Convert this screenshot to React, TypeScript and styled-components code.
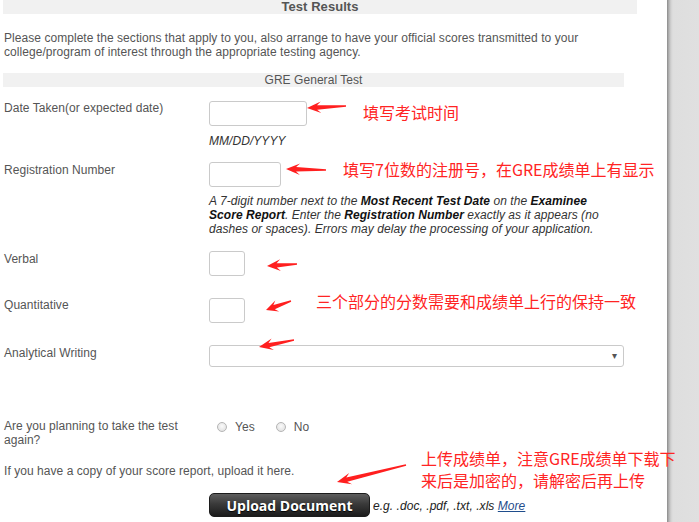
import React from 'react'
import styled, { createGlobalStyle } from 'styled-components'

const GlobalStyle = createGlobalStyle`
  html, body {
    margin: 0;
    padding: 0;
    background: #fff;
  }
  body {
    font-family: "Liberation Sans", Arial, sans-serif;
    font-size: 12px;
    letter-spacing: 0.05px;
    color: #555;
  }
`

type Pt = [number, number]

// arrows drawn on top of the screenshot: tail -> tip
const arrows: { tail: Pt; tip: Pt }[] = [
  { tail: [346, 106], tip: [307, 108] },
  { tail: [326, 170], tip: [286, 169] },
  { tail: [297, 264], tip: [267, 266] },
  { tail: [291, 301], tip: [266, 310] },
  { tail: [294, 340], tip: [259, 347] },
  { tail: [406, 465], tip: [337, 482] },
]

const arrowPoints = (tail: Pt, tip: Pt) => {
  const dx = tip[0] - tail[0]
  const dy = tip[1] - tail[1]
  const len = Math.hypot(dx, dy)
  const ux = dx / len
  const uy = dy / len
  const nx = -uy
  const ny = ux
  const head = Math.min(14, len * 0.45)
  const at = (d: number, w: number): string =>
    `${(tail[0] + ux * d + nx * w).toFixed(1)},${(tail[1] + uy * d + ny * w).toFixed(1)}`
  return [
    at(0, 0.7),
    at(len - head * 0.72, 2.2),
    at(len - head, 5.8),
    at(len, 0),
    at(len - head, -5.8),
    at(len - head * 0.72, -2.2),
    at(0, -0.7),
  ].join(' ')
}

export default function App() {
  return (
    <Screen>
      <GlobalStyle />
      <Page>
        <SectionBar $width={634} $bold>Test Results</SectionBar>
        <Intro>
          Please complete the sections that apply to you, also arrange to have your official scores transmitted to your
          college/program of interest through the appropriate testing agency.
        </Intro>
        <SectionBar $width={621}>GRE General Test</SectionBar>

        <FormRow $gap={14}>
          <Label>Date Taken(or expected date)</Label>
          <Field>
            <TextInput $width={98} />
            <Hint $gap={8}>MM/DD/YYYY</Hint>
          </Field>
        </FormRow>

        <FormRow $gap={14}>
          <Label $offset={1}>Registration Number</Label>
          <Field>
            <TextInput $width={72} />
            <Hint $gap={7}>
              A 7-digit number next to the <b>Most Recent Test Date</b> on the <b>Examinee Score Report</b>. Enter
              the <b>Registration Number</b> exactly as it appears (no dashes or spaces). Errors may delay the
              processing of your application.
            </Hint>
          </Field>
        </FormRow>

        <FormRow $gap={15}>
          <Label $offset={1}>Verbal</Label>
          <Field>
            <TextInput $width={36} />
          </Field>
        </FormRow>

        <FormRow $gap={22}>
          <Label>Quantitative</Label>
          <Field>
            <TextInput $width={36} />
          </Field>
        </FormRow>

        <FormRow $gap={22}>
          <Label $offset={1}>Analytical Writing</Label>
          <Field>
            <Select>
              <Caret>▾</Caret>
            </Select>
          </Field>
        </FormRow>

        <FormRow $gap={52}>
          <Label>Are you planning to take the test again?</Label>
          <RadioGroup>
            <RadioOption>
              <Radio />
              Yes
            </RadioOption>
            <RadioOption>
              <Radio />
              No
            </RadioOption>
          </RadioGroup>
        </FormRow>

        <UploadNote>If you have a copy of your score report, upload it here.</UploadNote>

        <FormRow $gap={15}>
          <span />
          <UploadLine>
            <UploadButton>Upload Document</UploadButton>
            <Formats>
              e.g. .doc, .pdf, .txt, .xls <MoreLink>More</MoreLink>
            </Formats>
          </UploadLine>
        </FormRow>
      </Page>
      <Gutter />

      <Annotations>
        <svg width="699" height="522" viewBox="0 0 699 522">
          {arrows.map((a, i) => (
            <polygon key={i} points={arrowPoints(a.tail, a.tip)} fill="#ff1f1f" />
          ))}
        </svg>
        <Note $x={363} $y={101}>填写考试时间</Note>
        <Note $x={343} $y={158}>填写7位数的注册号，在GRE成绩单上有显示</Note>
        <Note $x={316} $y={290}>三个部分的分数需要和成绩单上行的保持一致</Note>
        <Note $x={421} $y={447}>
          上传成绩单，注意GRE成绩单下载下
          <br />
          来后是加密的，请解密后再上传
        </Note>
      </Annotations>
    </Screen>
  )
}

const Screen = styled.div`
  position: relative;
  display: flex;
  width: 699px;
  height: 522px;
  overflow: hidden;
`

const Page = styled.div`
  width: 667px;
  flex-shrink: 0;
  padding-left: 3px;
  box-sizing: border-box;
  background: #fff;
`

const Gutter = styled.div`
  flex: 1;
  background: linear-gradient(to right, #8a8a8a 0px, #b4b4b4 2px, #d2d2d2 4px, #dedede 6px, #e0e0e0 100%);
`

const SectionBar = styled.div<{ $width: number; $bold?: boolean }>`
  width: ${p => p.$width}px;
  height: 14px;
  line-height: 14px;
  background: #f1f1f1;
  text-align: center;
  color: #555;
  font-size: ${p => (p.$bold ? 13 : 12)}px;
  font-weight: ${p => (p.$bold ? 700 : 400)};
`

const Intro = styled.p`
  width: 634px;
  margin: 17px 0 14px;
  padding-left: 1px;
  line-height: 14px;
`

const FormRow = styled.div<{ $gap: number }>`
  display: grid;
  grid-template-columns: 206px 1fr;
  margin-top: ${p => p.$gap}px;
`

const Label = styled.div<{ $offset?: number }>`
  padding: ${p => p.$offset ?? 0}px 14px 0 1px;
  line-height: 14px;
`

const Field = styled.div`
  display: flex;
  flex-direction: column;
  align-items: flex-start;
`

const TextInput = styled.input.attrs({ type: 'text' })<{ $width: number }>`
  width: ${p => p.$width}px;
  height: 25px;
  box-sizing: border-box;
  margin: 0;
  border: 1px solid #cacaca;
  border-radius: 3px;
  background: #fff;
`

const Hint = styled.div<{ $gap: number }>`
  margin-top: ${p => p.$gap}px;
  width: 400px;
  line-height: 14px;
  font-style: italic;
  color: #333;

  b {
    color: #111;
  }
`

const Select = styled.div`
  width: 415px;
  height: 22px;
  box-sizing: border-box;
  border: 1px solid #cacaca;
  border-radius: 3px;
  display: flex;
  justify-content: flex-end;
  align-items: center;
  padding-right: 6px;
`

const Caret = styled.span`
  font-size: 10px;
  color: #555;
  line-height: 1;
`

const RadioGroup = styled.div`
  display: flex;
  align-items: center;
  gap: 21px;
  padding: 1px 0 0 8px;
  height: 14px;
`

const RadioOption = styled.label`
  display: flex;
  align-items: center;
  gap: 8px;
  line-height: 14px;
`

const Radio = styled.span`
  width: 10px;
  height: 10px;
  box-sizing: border-box;
  border-radius: 50%;
  border: 1px solid #b5b5b5;
  background: radial-gradient(circle at 50% 40%, #fafafa, #dcdcdc);
`

const UploadNote = styled.div`
  margin-top: 17px;
  padding-left: 1px;
  line-height: 14px;
`

const UploadLine = styled.div`
  display: flex;
  align-items: center;
  gap: 3px;
`

const UploadButton = styled.div`
  width: 161px;
  height: 24px;
  box-sizing: border-box;
  border-radius: 5px;
  border: 1px solid #1c1c1c;
  background: linear-gradient(to bottom, #5e5e5e 0%, #3a3a3a 45%, #1b1b1b 100%);
  color: #fff;
  font-family: "Open Sans", "Liberation Sans", sans-serif;
  font-weight: 700;
  font-size: 14px;
  letter-spacing: 0;
  display: flex;
  align-items: center;
  justify-content: center;
  text-shadow: 0 1px 1px #000;
`

const Formats = styled.span`
  font-style: italic;
  color: #222;
  padding-top: 1px;
`

const MoreLink = styled.a`
  color: #1f4d8c;
  text-decoration: underline;
`

const Annotations = styled.div`
  position: absolute;
  inset: 0;
  pointer-events: none;

  svg {
    position: absolute;
    left: 0;
    top: 0;
  }
`

const Note = styled.div<{ $x: number; $y: number }>`
  position: absolute;
  left: ${p => p.$x}px;
  top: ${p => p.$y}px;
  font-family: "Noto Sans CJK SC", "Liberation Sans", sans-serif;
  font-size: 16px;
  line-height: 22px;
  letter-spacing: 0;
  color: #ff2424;
  white-space: nowrap;
`
